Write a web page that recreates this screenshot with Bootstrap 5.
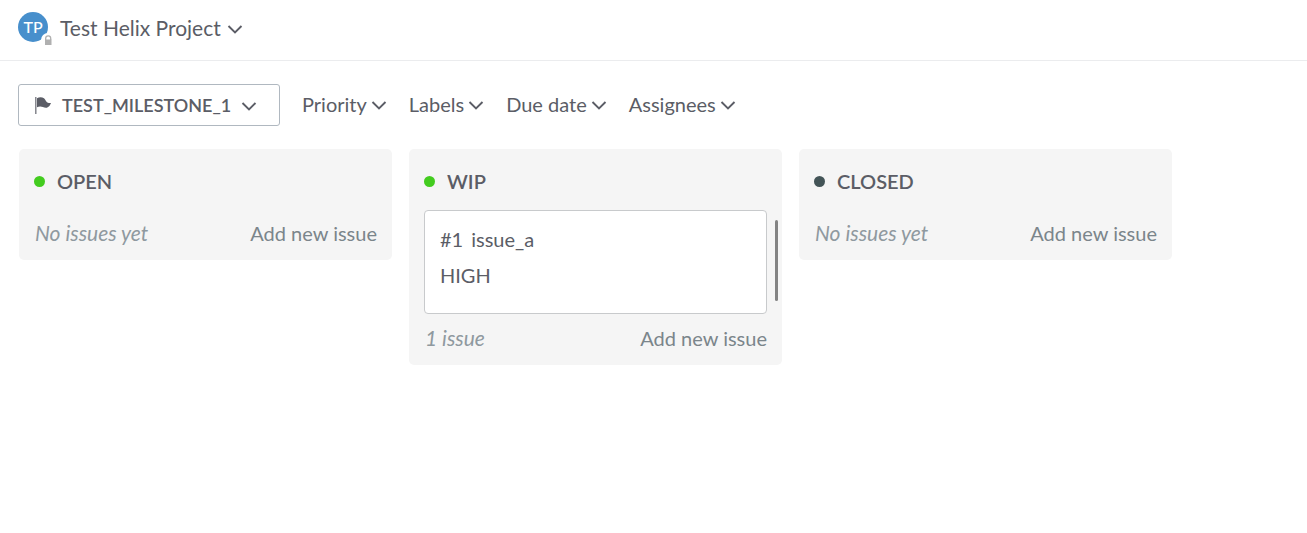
<!DOCTYPE html>
<html lang="en">
<head>
<meta charset="utf-8">
<meta name="viewport" content="width=device-width, initial-scale=1">
<title>Test Helix Project</title>
<link href="https://cdn.jsdelivr.net/npm/bootstrap@5.3.0/dist/css/bootstrap.min.css" rel="stylesheet">
<style>
  body { font-family: Lato, sans-serif; font-size: 20px; line-height: 30px; color: #5b5d66; background: #fff; }
  .btn-plain { --bs-btn-padding-x: 0; --bs-btn-padding-y: 0; --bs-btn-border-width: 0; --bs-btn-font-size: 20px; --bs-btn-line-height: 30px; --bs-btn-color: #5b5d66; --bs-btn-hover-color: #33353c; }
  .btn-project { --bs-btn-font-size: 21px; --bs-btn-line-height: 32px; margin-left: 12px; gap: 6px; }
  .topbar { height: 61px; padding: 12px 18px 0; border-bottom: 1px solid #ebecee; }
  .avatar { width: 30px; height: 30px; font-size: 16px; font-weight: 500; background: #478fcc; }
  .avatar-lock { right: -7px; bottom: -5px; }
  .filters { padding: 23px 18px; column-gap: 22px; }
  .filters .btn-plain { padding-bottom: 2px; }
  .btn-milestone { --bs-btn-padding-x: 16px; --bs-btn-padding-y: 5px; --bs-btn-font-size: 18px; --bs-btn-font-weight: 600; --bs-btn-line-height: 30px; --bs-btn-color: #5b5d66; --bs-btn-border-color: #b0b8c0; --bs-btn-border-radius: 3px; width: 262px; gap: 10px; }
  .chevron { width: 16px; height: 14px; }
  .board { padding: 0 19px; gap: 17px; }
  .lane { width: 373px; max-width: 100%; padding: 15px 15px 12px; background: #f5f5f5; border-radius: 5px; }
  .lane-title { font-size: 20px; line-height: 34px; font-weight: 600; margin: 0; gap: 12px; }
  .dot { width: 11px; height: 11px; background: #43cc1f; }
  .dot-closed { background: #435457; }
  .lane-body { margin: 12px 0 9px; }
  .issue { height: 104px; padding: 10px 15px; border: 1px solid #c8cacc; border-radius: 4px; }
  .issue-row { line-height: 36px; }
  .scroll-thumb { width: 3px; height: 81px; right: -11px; top: 10px; background: #838383; border-radius: 2px; }
  .lane-empty { height: 20px; }
  .count { font-size: 21px; color: #8f999f; padding-left: 1px; }
  .btn-add { --bs-btn-color: #7b858b; }
</style>
</head>
<body>
<svg class="d-none" aria-hidden="true"><symbol id="chevron" viewBox="0 0 16 14"><path d="M1.500 5 8 11.500 14.500 5" fill="none" stroke="currentColor" stroke-width="1.900"/></symbol></svg>

<header class="topbar d-flex align-items-start">
  <div class="avatar rounded-circle position-relative d-flex align-items-center justify-content-center text-white flex-shrink-0">TP
    <svg class="avatar-lock position-absolute" width="14" height="14" viewBox="0 0 14 14" aria-label="Private"><circle cx="7" cy="7" r="7" fill="#fff"/><path d="M4.700 7V5.300a2.500 2.500 0 0 1 5 0V7" fill="none" stroke="#b0b0b0" stroke-width="1.300"/><rect x="4" y="6.500" width="6.500" height="5.500" fill="#b0b0b0"/></svg>
  </div>
  <button type="button" class="btn btn-plain btn-project d-flex align-items-center text-nowrap">Test Helix Project <svg class="chevron"><use href="#chevron"/></svg></button>
</header>

<main>
  <div class="filters d-flex flex-wrap align-items-center">
    <button type="button" class="btn btn-milestone d-flex align-items-center"><svg width="17" height="18" viewBox="0 0 17 18"><path d="M.8 1v17" stroke="currentColor" stroke-opacity=".8" stroke-width="1.400"/><path d="M2 2.200C4 .9 7 .8 9 2.200c1.500 1.200 1.500 3 3 4 1.200.7 2.500.8 4 .8-.7 2-2.500 4.800-5 4.800-2.500 0-4-1.300-6-1.200-1.200 0-2 .2-3 .7z" fill="currentColor"/></svg>TEST_MILESTONE_1<svg class="chevron"><use href="#chevron"/></svg></button>
    <button type="button" class="btn btn-plain d-flex align-items-center gap-1">Priority <svg class="chevron"><use href="#chevron"/></svg></button>
    <button type="button" class="btn btn-plain d-flex align-items-center gap-1">Labels <svg class="chevron"><use href="#chevron"/></svg></button>
    <button type="button" class="btn btn-plain d-flex align-items-center gap-1">Due date <svg class="chevron"><use href="#chevron"/></svg></button>
    <button type="button" class="btn btn-plain d-flex align-items-center gap-1">Assignees <svg class="chevron"><use href="#chevron"/></svg></button>
  </div>

  <div class="board d-flex flex-wrap align-items-start">
    <section class="lane">
      <h2 class="lane-title d-flex align-items-center"><span class="dot rounded-circle"></span>OPEN</h2>
      <div class="lane-empty"></div>
      <div class="d-flex justify-content-between"><em class="count">No issues yet</em><button type="button" class="btn btn-plain btn-add">Add new issue</button></div>
    </section>
    <section class="lane">
      <h2 class="lane-title d-flex align-items-center"><span class="dot rounded-circle"></span>WIP</h2>
      <div class="lane-body position-relative">
        <article class="issue bg-white">
          <div class="issue-row d-flex"><span class="me-2">#1</span><span>issue_a</span></div>
          <div class="issue-row">HIGH</div>
        </article>
        <span class="scroll-thumb position-absolute"></span>
      </div>
      <div class="d-flex justify-content-between"><em class="count">1 issue</em><button type="button" class="btn btn-plain btn-add">Add new issue</button></div>
    </section>
    <section class="lane">
      <h2 class="lane-title d-flex align-items-center"><span class="dot dot-closed rounded-circle"></span>CLOSED</h2>
      <div class="lane-empty"></div>
      <div class="d-flex justify-content-between"><em class="count">No issues yet</em><button type="button" class="btn btn-plain btn-add">Add new issue</button></div>
    </section>
  </div>
</main>
<script src="https://cdn.jsdelivr.net/npm/bootstrap@5.3.0/dist/js/bootstrap.bundle.min.js"></script>
</body>
</html>
